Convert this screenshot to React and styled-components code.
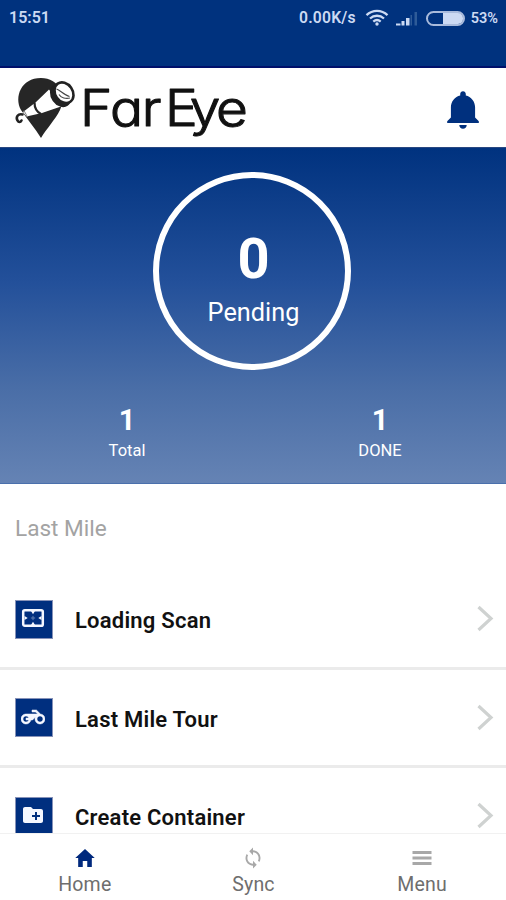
import React, { useState } from 'react';
import styled, { createGlobalStyle } from 'styled-components';
import { MdCreateNewFolder } from 'react-icons/md';
import { IoMdNotifications, IoMdHome, IoMdSync } from 'react-icons/io';

const GlobalStyle = createGlobalStyle`
  * {
    box-sizing: border-box;
  }

  body {
    margin: 0;
    font-family: Roboto, "Liberation Sans", sans-serif;
    background: #fff;
  }

  svg {
    display: block;
  }
`;

// Styled components
const Screen = styled.div`
  display: flex;
  flex-direction: column;
  width: 506px;
  height: 900px;
  overflow: hidden;
  background: #fff;
`;

const StatusBar = styled.div`
  display: flex;
  justify-content: space-between;
  align-items: flex-start;
  flex: none;
  height: 68px;
  padding: 9px 8px 0 9px;
  background: #00327e;
  border-bottom: 2px solid #00106b;
  color: #ccdaf3;
  font-size: 16px;
  font-weight: 600;
  line-height: 18px;
`;

const StatusGroup = styled.div`
  display: flex;
  align-items: center;
  height: 18px;
`;

const Speed = styled.span`
  margin-right: 9px;
  font-size: 15.7px;
  letter-spacing: 0.2px;
`;

const Signal = styled.div`
  margin-left: 7px;
`;

const Battery = styled.div`
  width: 39px;
  height: 15px;
  margin: 0 6px 0 8px;
  border: 2px solid #a9bbdc;
  border-radius: 8px;
`;

const BatteryLevel = styled.div`
  width: 55%;
  height: 100%;
  margin-left: auto;
  border-radius: 0 5px 5px 0;
  background: #ccdaf3;
`;

const Percent = styled.span`
  padding-top: 1px;
  font-size: 14.5px;
`;

const Header = styled.header`
  display: flex;
  justify-content: space-between;
  align-items: center;
  flex: none;
  height: 79px;
  padding: 0 20px 0 14px;
`;

const Bell = styled(IoMdNotifications)`
  margin-top: 4px;
  color: #00307e;
`;

const Wordmark = styled.text`
  font-family: Inter, "Open Sans", sans-serif;
  font-size: 50px;
  font-weight: 300;
  font-feature-settings: "cv11";
  fill: #111;
  stroke: #111;
  stroke-width: 1.1px;
  stroke-linejoin: round;
`;

const Hero = styled.section`
  display: flex;
  flex-direction: column;
  align-items: center;
  flex: none;
  height: 337px;
  padding-top: 24px;
  background: linear-gradient(#00327f 0%, #23509a 40%, #4a6ea7 72%, #6583b4 100%);
  border-top: 1px solid #284781;
  border-bottom: 1px solid #4a70ac;
  color: #fff;
`;

const Ring = styled.div`
  display: flex;
  flex-direction: column;
  align-items: center;
  width: 198px;
  height: 198px;
  margin-right: 3px;
  padding: 51px 0 0 4px;
  border: 6px solid #fff;
  border-radius: 50%;
`;

const PendingCount = styled.div`
  font-size: 56px;
  font-weight: 700;
  line-height: 60px;
`;

const PendingLabel = styled.div`
  margin-top: 9px;
  font-size: 25.3px;
  line-height: 30px;
`;

const Stats = styled.div`
  display: grid;
  grid-template-columns: 1fr 1fr;
  width: 100%;
  margin-top: 35px;
`;

const Stat = styled.div`
  padding-left: 1px;
  text-align: center;
  font-size: 16.5px;
  line-height: 20px;

  strong {
    display: block;
    margin-bottom: 6px;
    font-size: 29px;
    font-weight: 700;
    line-height: 30px;
  }
`;

const Content = styled.main`
  flex: 1;
  min-height: 0;
  overflow: hidden;
`;

const SectionTitle = styled.h2`
  margin: 0;
  padding: 31px 15px 0;
  height: 87px;
  color: #a3a3a3;
  font-size: 22.6px;
  font-weight: 400;
  letter-spacing: 0;
  line-height: 28px;
`;

const Row = styled.div`
  display: flex;
  align-items: center;
  height: 98.5px;
  padding: 1px 12px 0 15px;
  border-bottom: 3px solid #ebebeb;
  cursor: pointer;
`;

const IconBox = styled.div`
  display: flex;
  justify-content: center;
  align-items: center;
  width: 38px;
  height: 39px;
  padding: 0 2px 2px 0;
  border: 1px solid #8792b8;
  background: #002f7f;
  color: #f4f7ff;
`;

const RowLabel = styled.span`
  flex: 1;
  margin-left: 22px;
  padding-top: 3px;
  color: #111;
  font-size: 22px;
  font-weight: 600;
  letter-spacing: 0.22px;
`;

const Nav = styled.nav`
  display: grid;
  grid-template-columns: repeat(3, 1fr);
  flex: none;
  height: 67px;
  border-top: 1px solid #f1f1f1;
  background: #fff;
`;

const NavItem = styled.button`
  display: flex;
  flex-direction: column;
  align-items: center;
  padding: 12px 0 0 1px;
  border: none;
  background: none;
  color: #6e6e6e;
  font-family: inherit;
  font-size: 19.5px;
  line-height: 24px;
  letter-spacing: 0.2px;
  cursor: pointer;

  svg {
    height: 24px;
    margin-bottom: 3px;
    color: ${(props) => (props.$active ? '#00297d' : '#a8a8a8')};
  }
`;

function OverscanIcon({ size }) {
    return (
        <svg width={size} height={size} viewBox="0 0 24 24" fill="currentColor">
            <rect x="2.2" y="4.2" width="19.6" height="15.6" rx="1.6" fill="none" stroke="currentColor" strokeWidth="2.5" />
            <path d="M10 5h4l-2 3.2zM10 19h4l-2-3.2zM3.5 10v4l3.2-2zM20.5 10v4l-3.2-2z" />
            <path d="M12 9.5l1 1.5 1.5 1-1.5 1-1 1.5-1-1.5-1.5-1 1.5-1z" opacity="0.3" />
        </svg>
    );
}

function MotorcycleIcon({ size }) {
    return (
        <svg width={size} height={size} viewBox="0 0 24 24" fill="currentColor" stroke="currentColor" strokeWidth="0.5">
            <path d="M19.44 9.03L15.41 5H11v2h3.59l2 2H5c-2.8 0-5 2.2-5 5s2.2 5 5 5c2.46 0 4.45-1.69 4.9-4h1.65l2.77-2.77c-.21.54-.32 1.14-.32 1.77 0 2.8 2.2 5 5 5s5-2.2 5-5c0-2.65-1.97-4.77-4.56-4.97zM7.82 15C7.4 16.15 6.28 17 5 17c-1.63 0-3-1.37-3-3s1.37-3 3-3c1.28 0 2.4.85 2.82 2H5v2h2.82zM19 17c-1.66 0-3-1.34-3-3s1.34-3 3-3 3 1.34 3 3-1.34 3-3 3z" />
        </svg>
    );
}

function MenuIcon({ size }) {
    return (
        <svg width={size} height={size} viewBox="0 0 24 24" fill="none" stroke="currentColor" strokeWidth="3">
            <path d="M2.5 6.5h19M2.5 12h19M2.5 17.5h19" />
        </svg>
    );
}

function WifiIcon() {
    return (
        <svg width="24" height="18" viewBox="0 0 24 18" fill="none" stroke="#ccdaf3" strokeWidth="2.3">
            <path d="M1.5 6.2C7.5 .5 16.5 .5 22.5 6.2" />
            <path d="M5 9.5c4-3.7 10-3.7 14 0" />
            <path d="M8.3 12.6c2.2-1.9 5.2-1.9 7.4 0" />
            <circle cx="12" cy="15" r="1.7" fill="#ccdaf3" stroke="none" />
        </svg>
    );
}

function SignalIcon() {
    return (
        <svg width="22" height="16" viewBox="0 0 22 16" fill="#ccdaf3">
            <path d="M0 15.5v-2h4.5v2zM5.5 15.5V11h3v4.5zM10 15.5V8h3.5v7.5z" />
            <path d="M14.5 15.5V5H16v10.5zM18.5 15.5V2H21v13.5z" fill="#2e5b98" />
        </svg>
    );
}

function Logo() {
    return (
        <svg width="236" height="70" viewBox="14 72 236 70">
            {/* map pin */}
            <path d="M41 137C35 127 27 118 21 109C14 96 21 77 41 77C59 77 67 94 60 109C55 119 47 127 41 137Z" fill="#262626" />
            {/* telescope */}
            <path d="M23 111L35.5 101.5L49 88.5L61 105.5L42 112L26.5 115.5Z" fill="#fff" />
            <path d="M34.5 101.5C34.5 107 37 111 41 113" fill="none" stroke="#262626" strokeWidth="2.2" />
            <path d="M24 109.5L27.5 116" fill="none" stroke="#888" strokeWidth="1" />
            <ellipse cx="60.5" cy="94.5" rx="9.5" ry="12.5" transform="rotate(-35 60.5 94.5)" fill="#222" />
            <ellipse cx="64" cy="91.7" rx="8.7" ry="11" transform="rotate(-35 64 91.7)" fill="#fff" stroke="#222" strokeWidth="2.6" />
            <path d="M56.5 88C60 89 64 94 69.5 95.5M59 93.5C61 97 66 98 70 97" fill="none" stroke="#444" strokeWidth="1.1" />
            <path d="M22.5 113.5C18 112.5 15.5 116 17.5 119.5C18.5 121.5 20.5 121.5 21.5 119.5" fill="none" stroke="#222" strokeWidth="2.6" strokeLinecap="round" />
            <Wordmark transform="scale(1.1 1)" x="72.7 100 128.8 150 172.4 196.3" y="125.5">FarEye</Wordmark>
        </svg>
    );
}

function Chevron() {
    return (
        <svg width="18" height="28" viewBox="0 0 18 28" fill="none" stroke="#cfd2d1" strokeWidth="3.2">
            <path d="M2.5 2l12.5 11.5L2.5 25" />
        </svg>
    );
}

const rows = [
    { label: 'Loading Scan', icon: OverscanIcon },
    { label: 'Last Mile Tour', icon: MotorcycleIcon },
    { label: 'Create Container', icon: MdCreateNewFolder },
];

const tabs = [
    { label: 'Home', icon: IoMdHome },
    { label: 'Sync', icon: IoMdSync },
    { label: 'Menu', icon: MenuIcon },
];

function App() {
    const [activeTab, setActiveTab] = useState('Home');

    return (
        <>
            <GlobalStyle />
            <Screen>
                <StatusBar>
                    <StatusGroup>15:51</StatusGroup>
                    <StatusGroup>
                        <Speed>0.00K/s</Speed>
                        <WifiIcon />
                        <Signal>
                            <SignalIcon />
                        </Signal>
                        <Battery>
                            <BatteryLevel />
                        </Battery>
                        <Percent>53%</Percent>
                    </StatusGroup>
                </StatusBar>
                <Header>
                    <Logo />
                    <Bell size={46} />
                </Header>
                <Hero>
                    <Ring>
                        <PendingCount>0</PendingCount>
                        <PendingLabel>Pending</PendingLabel>
                    </Ring>
                    <Stats>
                        <Stat><strong>1</strong>Total</Stat>
                        <Stat><strong>1</strong>DONE</Stat>
                    </Stats>
                </Hero>
                <Content>
                    <SectionTitle>Last Mile</SectionTitle>
                    {rows.map(({ label, icon: Icon }) => (
                        <Row key={label}>
                            <IconBox><Icon size={24} /></IconBox>
                            <RowLabel>{label}</RowLabel>
                            <Chevron />
                        </Row>
                    ))}
                </Content>
                <Nav>
                    {tabs.map(({ label, icon: Icon }) => (
                        <NavItem
                            key={label}
                            $active={activeTab === label}
                            onClick={() => setActiveTab(label)}
                        >
                            <Icon size={24} />
                            {label}
                        </NavItem>
                    ))}
                </Nav>
            </Screen>
        </>
    );
}

export default App;
